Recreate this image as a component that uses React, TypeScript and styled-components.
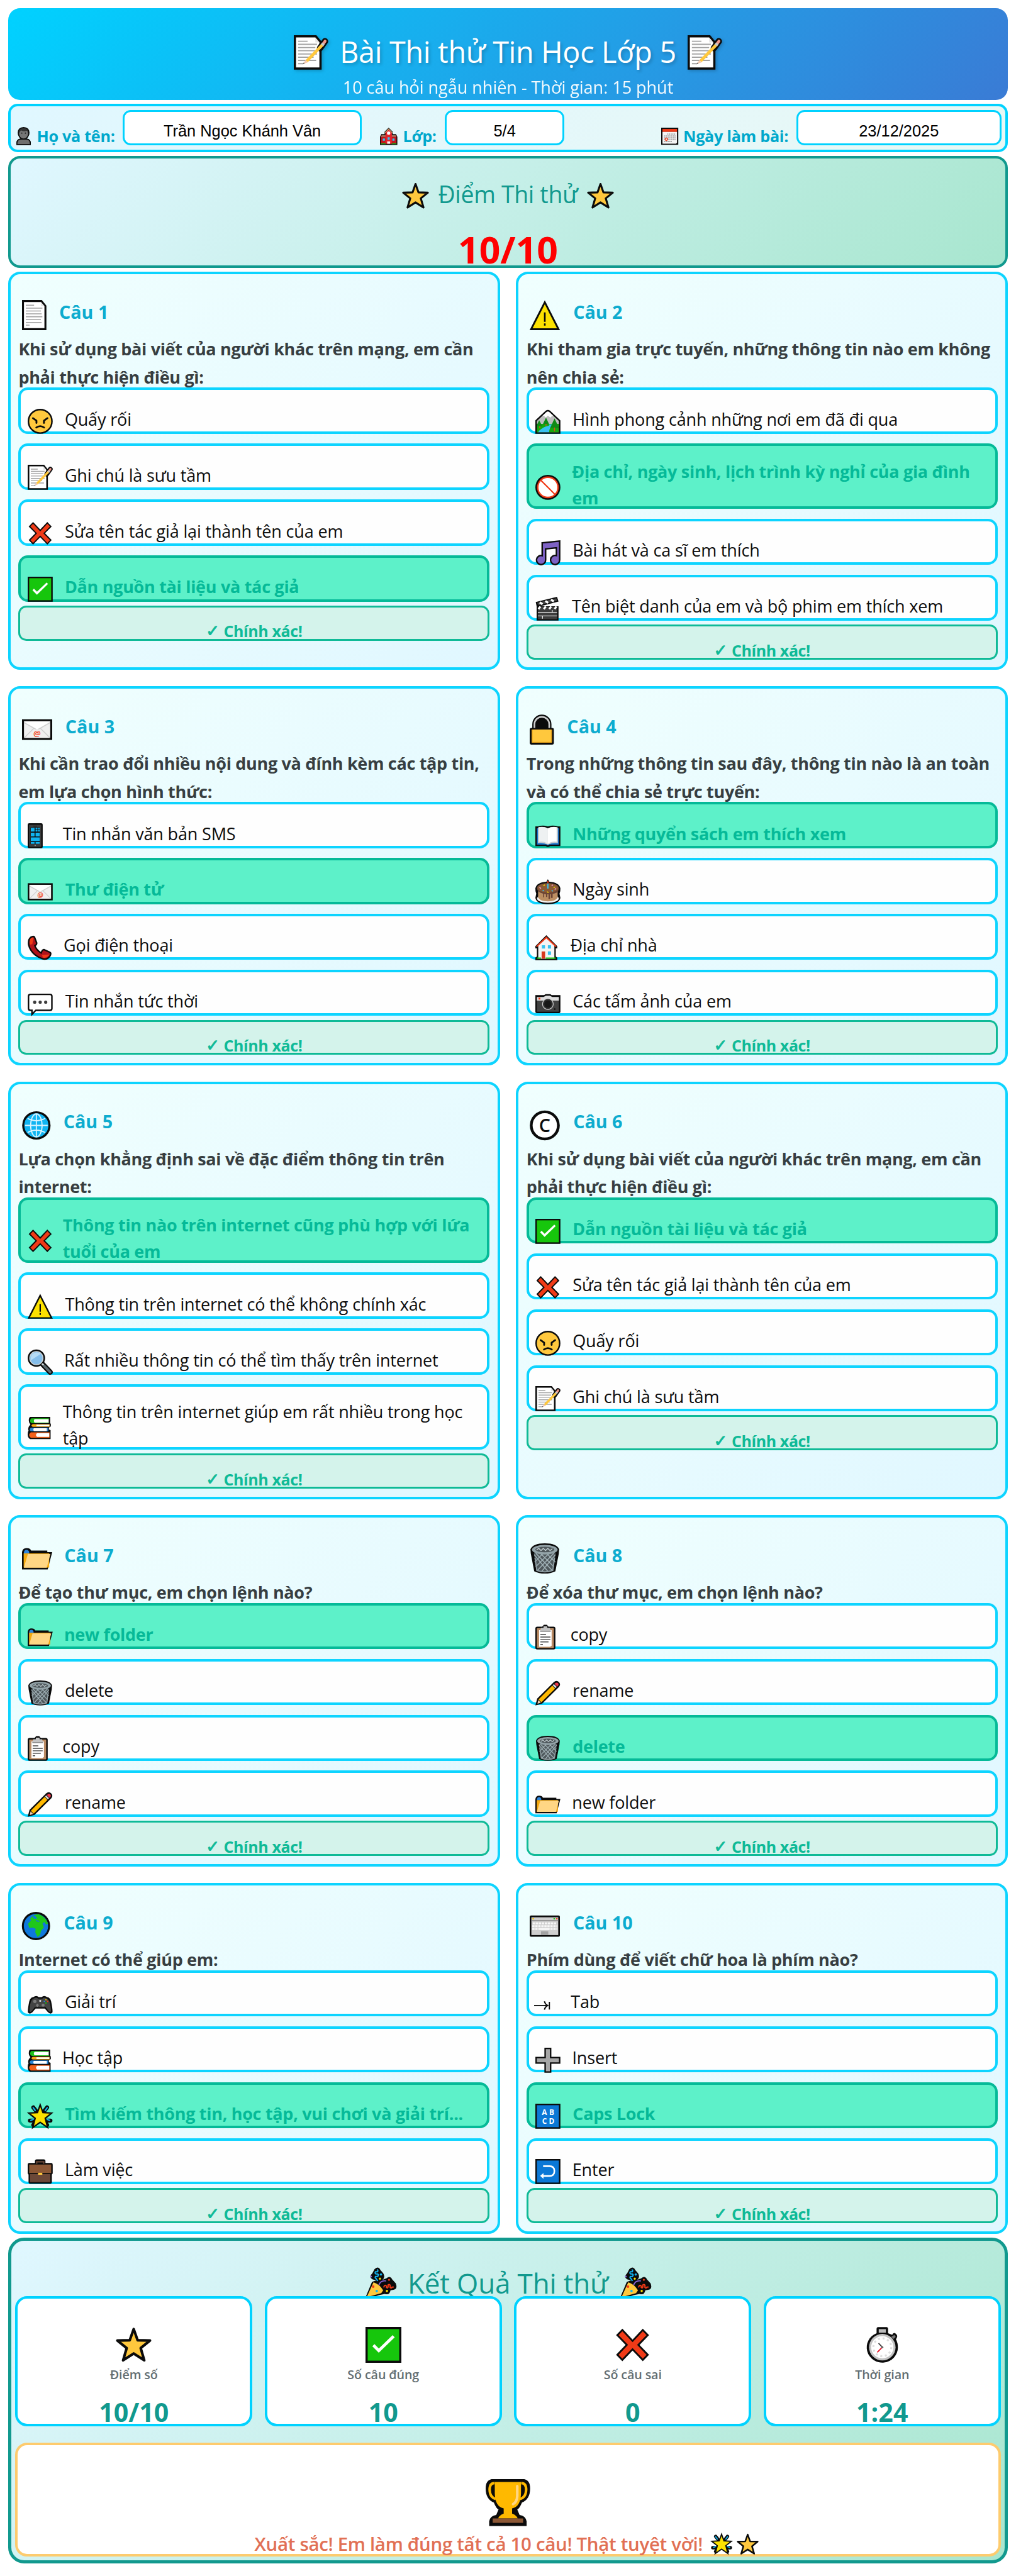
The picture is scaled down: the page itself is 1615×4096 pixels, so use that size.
import type { ReactNode } from 'react';
import styled, { createGlobalStyle, css } from 'styled-components';

const GlobalStyle = createGlobalStyle`
  * {
    box-sizing: border-box;
  }

  body {
    margin: 0;
    background: #fff;
    font-family: 'Open Sans', 'Noto Sans', sans-serif;
  }
`;

/* ---------- icons, all drawn on a 40 unit high grid ---------- */

const K = '#0b0b0b';
const STAR = 'M20 2.4L24.4 14.8L38.2 15.2L27.8 23.6L31.8 37.2L20 29.6L8.2 37.2L12.2 23.6L1.8 15.2L15.6 14.8Z';

const paper = (
  <>
    <path d="M1.3 1.3H25.6L31 8V38.7H1.3Z" fill="#fff" stroke={K} strokeWidth="2.6" />
    <path d="M25 2.6V8.4H30" fill="#e6e6e6" />
  </>
);

const glyphs: Record<string, { w?: number; art: ReactNode }> = {
  page: {
    w: 32,
    art: (
      <>
        {paper}
        <path d="M5 7h11M5 10.9h22M5 14.6h20M5 18.4h21M5 22.2h22M5 26h20M5 29.8h21M5 33.4h5" stroke="#a3a3a3" strokeWidth="1.3" />
      </>
    ),
  },
  memo: {
    art: (
      <>
        {paper}
        <path d="M5 7h11M5 10.6h22M5 14.3h20M5 18h22M5 21.8h22M5 25.5h18M5 29.2h21M5 33h6" stroke="#a3a3a3" strokeWidth="1.4" />
        <path d="M36.2 7L30.5 15" stroke={K} strokeWidth="7.4" strokeLinecap="round" />
        <path d="M36.3 6.9L34.5 9.5" stroke="#f0978a" strokeWidth="3.4" strokeLinecap="round" />
        <path d="M34.4 9.4L32.6 12" stroke="#c9c9c9" strokeWidth="3.8" />
        <path d="M32.8 11.6L15 30" stroke="#ffc83d" strokeWidth="3.6" />
        <path d="M13.6 28.8L16.4 31.4L10.6 33.6Z" fill="#f4c9b0" />
        <path d="M11.6 31.6L12.6 32.8L10.4 33.8Z" fill="#555" />
      </>
    ),
  },
  warning: {
    art: (
      <>
        <path d="M20 3L38.2 38.8H1.8Z" fill="#fce100" stroke={K} strokeWidth="2.4" />
        <path d="M20 16.5V29M20 31V34" stroke={K} strokeWidth="2.2" />
      </>
    ),
  },
  envelope: {
    art: (
      <>
        <rect x="1.3" y="7.7" width="37.4" height="24.8" fill="#f0f0f0" />
        <path d="M2 9L20 20L38 9Z" fill="#fff" />
        <path d="M2 10.5L20 20.5L38 10.5M2.5 31.5L15.5 18.5M37.5 31.5L24.5 18.5" fill="none" stroke="#cfcfcf" strokeWidth="1.3" />
        <circle cx="20" cy="25" r="5.6" fill="#f0f0f0" />
        <text x="20" y="28.8" textAnchor="middle" fontSize="11" fontWeight="600" fill="#f03a17">@</text>
        <rect x="1.3" y="7.7" width="37.4" height="24.8" fill="none" stroke={K} strokeWidth="2.6" />
      </>
    ),
  },
  lock: {
    w: 32,
    art: (
      <>
        <path d="M3.4 22V13A12.7 12.7 0 0 1 28.8 13V22Z" fill={K} />
        <path d="M6.3 20V13A9.8 9.8 0 0 1 25.9 13V20" fill="none" stroke="#cccccc" strokeWidth="2.2" />
        <rect y="18" width="32" height="22" rx="2" fill={K} />
        <rect x="2.6" y="20" width="26.8" height="17.4" rx="1" fill="#ffc83d" />
        <path d="M3.2 20V37M28.8 20V37M3 37H29" stroke="#e8a31c" strokeWidth="1.2" />
      </>
    ),
  },
  globe: {
    w: 38,
    art: (
      <>
        <circle cx="19" cy="20.4" r="17.4" fill="#10b4f2" stroke={K} strokeWidth="2.8" />
        <g fill="none" stroke="#d9f4ff" strokeWidth="1.5">
          <path d="M4 20.4H34M19 5V36M7.4 11Q19 17.4 30.6 11M7.4 29.8Q19 23.4 30.6 29.8" />
          <ellipse cx="19" cy="20.4" rx="7.6" ry="15.2" />
        </g>
      </>
    ),
  },
  copyright: {
    art: (
      <>
        <circle cx="20" cy="20.4" r="18" fill="#fff" stroke={K} strokeWidth="3.7" />
        <text x="20" y="28.9" textAnchor="middle" fontSize="24" fontWeight="600" fill={K}>C</text>
      </>
    ),
  },
  folder: {
    art: (
      <>
        <path d="M0 11.5Q1 6.3 6 6.3Q11 6.3 12 9.6H33.5V11.6H40L34 34.5H0Z" fill={K} />
        <path d="M2.4 13Q2.6 8.6 6 8.6Q9 8.6 9.6 12.4L9 13.6H2.4Z" fill="#2f86dd" />
        <path d="M2.2 13.4H36V32H2.2Z" fill="#f5a90f" />
        <path d="M7.8 14.2H37.6L32.8 32.2H2.4Z" fill="#ffd684" />
      </>
    ),
  },
  trash: {
    art: (
      <>
        <path d="M1 8Q4 0 20 0Q36 0 39 8L38.5 14L34 37Q28 40 20 40Q12 40 6 37L1.5 14Z" fill={K} />
        <path d="M5.5 13L9 36Q20 39.6 31 36L34.5 13Z" fill="#4f585c" />
        <path d="M8 13L30 36M15 14L32 31M23 14L34 25M32 13L10 36M25 14L8 31M17 14L6.5 25M6 15L24 37M34 15L16 37" stroke="#9fb0b5" strokeWidth="1.3" />
        <path d="M7 19L9.5 36Q20 39.6 30.5 36L33 19" fill="none" stroke="#8f9ea3" strokeWidth="1.6" />
        <ellipse cx="20" cy="8.4" rx="17" ry="6.4" fill="#93a3a8" />
        <ellipse cx="20" cy="8.2" rx="12.6" ry="3.6" fill="#4f585c" />
        <path d="M9 9L12 6.6L15 9.6L18 6.6L21 9.6L24 6.6L27 9.6L30 7" fill="none" stroke="#c4d0d3" strokeWidth="1.1" />
      </>
    ),
  },
  earth: {
    w: 38,
    art: (
      <>
        <circle cx="18.5" cy="20.4" r="17.4" fill="#0f78dc" stroke={K} strokeWidth="2.6" />
        <path d="M15 6L20 5L22 4.6Q31 8 34.4 17L32 18.6L29.4 15L27 17.6L29 22L25 27L24 32L20.6 35L17.6 29L18 24L14 22.6L9.6 23L8 17.4L12 13L10.6 11L13.6 7.4L15.6 10.4L20 11L18 7.6Z" fill="#1fc71a" />
        <path d="M19 12.4L23 13.6L22.6 15L18 14Z" fill="#0f78dc" />
      </>
    ),
  },
  keyboard: {
    art: (
      <>
        <rect y="6.5" width="40" height="28" rx="1.6" fill={K} />
        <rect x="2.2" y="8.8" width="35.6" height="23.6" fill="#cfcfcf" />
        <rect x="2.2" y="12.6" width="35.6" height="1.2" fill="#8c8c8c" />
        <path d="M4 16.8H36M3.4 20.6H36.6M3.4 24.4H36.6" stroke="#f7f7f7" strokeWidth="2.5" strokeDasharray="3 1" />
        <path d="M13 24.4H26" stroke="#f7f7f7" strokeWidth="2.5" />
        <rect x="15" y="27.4" width="9.6" height="5" fill="#a3a3a3" />
        <path d="M3.6 10.8H5.6" stroke="#f7c600" strokeWidth="1.5" />
        <path d="M31.5 10.8H33.5" stroke="#16c60c" strokeWidth="1.5" />
        <path d="M35 10.8H37" stroke="#f03a17" strokeWidth="1.5" />
      </>
    ),
  },
  angry: {
    art: (
      <>
        <circle cx="20" cy="20" r="18.8" fill="#ffc83d" stroke={K} strokeWidth="2.4" />
        <path d="M8.4 15L14 19V22.6M31.6 15L26 19V22.6" fill="none" stroke={K} strokeWidth="2.9" strokeLinecap="round" strokeLinejoin="round" />
        <path d="M13.6 30Q20 25.4 26.4 30" fill="none" stroke={K} strokeWidth="2.6" strokeLinecap="round" />
      </>
    ),
  },
  cross: {
    art: (
      <path
        d="M8.6 3.4L20 15.6L31.4 3.4L37 9.2L26.4 20L37 31L31.4 36.8L20 25L8.6 36.8L3 31L13.6 20L3 9.2Z"
        fill="#f03a17"
        stroke={K}
        strokeWidth="2"
      />
    ),
  },
  check: {
    art: (
      <>
        <rect x="1.2" y="1.2" width="37.6" height="37.6" fill="#16c60c" stroke={K} strokeWidth="2.4" />
        <path d="M8.8 20.4L14.8 26.4L31.4 10.4" fill="none" stroke="#fff" strokeWidth="3.4" />
      </>
    ),
  },
  landscape: {
    art: (
      <>
        <path d="M1.2 19L17 4.2Q20 2 23 4.2L38.8 19V38.8H1.2Z" fill="#bfbfbf" />
        <path d="M10 12L17 4.2Q20 2 23 4.2L30 12L27 11L24 14L20 11L16.6 14L13.6 11Z" fill="#fff" />
        <path d="M2 24H38V38H2Z" fill="#16a80c" />
        <path d="M22 25H28Q22 30 22 38H4Q10 29 22 27Z" fill="#37c2f0" />
        <path d="M17 14L22 24.6H12ZM6 18L11 28H1.6ZM30.6 15.4L38 31H23.6Z" fill="#0f8a16" />
        <path d="M17 24V27M7 28V31M30.6 30V36" stroke="#d1541b" strokeWidth="1.6" />
        <path d="M1.2 19L17 4.2Q20 2 23 4.2L38.8 19V38.8H1.2Z" fill="none" stroke={K} strokeWidth="2.4" />
      </>
    ),
  },
  ban: {
    art: (
      <>
        <circle cx="20" cy="20" r="20" fill={K} />
        <circle cx="20" cy="20" r="16.2" fill="#fff" stroke="#f03a17" strokeWidth="2.4" />
        <path d="M8.6 8.6L31.4 31.4" stroke="#f03a17" strokeWidth="2.2" />
      </>
    ),
  },
  music: {
    art: (
      <path
        d="M10.9 4.2L38.8 1.3V31.4A7.3 7.3 0 1 1 33.6 24.6V12.2L16.4 13.9V31.4A7.3 7.3 0 1 1 10.9 24.6Z"
        fill="#7e62c4"
        stroke={K}
        strokeWidth="2.4"
      />
    ),
  },
  clapper: {
    art: (
      <>
        <path d="M0.6 10.4L34.6 2L37 9.6L8 17H37V40H2V17Z" fill={K} />
        <path d="M2.8 11.6L33.4 4.2L34.6 8.4L5.4 15.4Z" fill="#444" />
        <path d="M7 10.8L11.4 13.8M16 8.6L20.4 11.6M25 6.4L29.4 9.4" stroke="#fff" strokeWidth="3.4" />
        <rect x="4.2" y="18" width="30.6" height="19.8" fill="#3d3d3d" />
        <path d="M5 21.6L8 17.4M13.6 21.6L16.6 17.4M22.2 21.6L25.2 17.4M30.8 21.6L33.6 17.4" stroke="#fff" strokeWidth="3.2" />
        <path d="M4 27H34.6M4 32.4H34.6M27 23V27M11.4 32.4V37" stroke="#f0f0f0" strokeWidth="1.2" />
      </>
    ),
  },
  mobile: {
    w: 24,
    art: (
      <>
        <rect width="24" height="40" rx="2.4" fill={K} />
        <rect x="2.2" y="2.4" width="19.6" height="35.4" rx="1" fill="#3c3c3c" />
        <rect x="4.6" y="6.6" width="14.8" height="26.6" fill={K} />
        <path d="M5 7.4h6v6H5zM12.6 7.4h3v2.6h-3zM16.6 7.4h2.6v2.6h-2.6zM12.6 11h3v2.4h-3zM16.6 11h2.6v2.4h-2.6zM5 15h6v6H5zM12.6 15h6.6v6h-6.6zM5 22.6h14.2v6H5zM5 30.2h6v2.6H5zM12.6 30.2h6.6v2.6h-6.6z" fill="#10b4f2" />
        <circle cx="12" cy="35.6" r="0.9" fill="#aaa" />
        <path d="M9 4.5H15" stroke={K} strokeWidth="1" />
      </>
    ),
  },
  handset: {
    art: (
      <>
        <path d="M5 3.4Q9.6 0.6 11 3.4L14.4 12.4Q14.6 15.4 11.4 16.6Q13.6 23.6 21.6 28.4Q23.4 22.8 26 23L35.6 27.4Q38.2 28.8 35.4 33.6Q31 40.4 22.6 37.4Q5.6 31 1.6 15.6Q0.4 7 5 3.4Z" fill="#b0141c" stroke={K} strokeWidth="2.4" />
        <path d="M5.4 4.8Q8 3 9.4 4.4L7.4 14.4L4 15Q1.6 8 5.4 4.8Z" fill="#f03a17" />
        <path d="M34.8 31Q31.6 37 24.6 36L22.6 31.6Q29 31 34.8 31Z" fill="#f03a17" />
      </>
    ),
  },
  speech: {
    art: (
      <>
        <path d="M4.4 5.2H35.6Q38.7 5.2 38.7 8.2V27.6Q38.7 30.6 35.6 30.6H13L6.8 37.2V30.6H4.4Q1.3 30.6 1.3 27.6V8.2Q1.3 5.2 4.4 5.2Z" fill="#fff" stroke={K} strokeWidth="2.4" />
        <circle cx="11.2" cy="17.6" r="2.6" fill="#3d3d3d" />
        <circle cx="20" cy="17.6" r="2.6" fill="#3d3d3d" />
        <circle cx="28.8" cy="17.6" r="2.6" fill="#3d3d3d" />
      </>
    ),
  },
  book: {
    art: (
      <>
        <path d="M0 5H4Q12 2.4 20 5Q28 2.4 36 5H40V36.4H23.6Q20 39.4 16.4 36.4H0Z" fill={K} />
        <path d="M2.4 8H37.6V34.2H22.6Q20 36.6 17.4 34.2H2.4Z" fill="#1673cf" />
        <path d="M4 6.8Q13 4.4 20 8.4Q27 4.4 36 6.8V32Q27 30.6 20 34.2Q13 30.6 4 32Z" fill="#c7cdd0" />
        <path d="M6 6.4Q14 4.8 20 8.4V32.8Q14 28.4 6 29.6Z" fill="#eef1f2" />
        <path d="M34 6.4Q26 4.8 20 8.4V32.8Q26 28.4 34 29.6Z" fill="#fff" />
      </>
    ),
  },
  cake: {
    art: (
      <>
        <path d="M20 0L22.4 4Q38 5 40 14.6Q40.2 20 38.6 23L40 30Q38 40 20 40Q2 40 0 30L1.4 23Q-0.2 20 0 14.6Q2 5 17.6 4Z" fill={K} />
        <ellipse cx="20" cy="31" rx="17.4" ry="6.6" fill="#f4f4f4" />
        <path d="M4.4 16V29.4Q8 35.4 20 35.4Q32 35.4 35.6 29.4V16Z" fill="#bc8f62" />
        <path d="M2.4 14Q4 6.4 20 6.4Q36 6.4 37.6 14Q37.4 21 31 22.6L27.6 23.4V30H25V24H23.4V31.6H21V24H19V28.4H17V24L14 23.6V29H12.4V23Q2.6 20.6 2.4 14Z" fill="#6b4434" />
        <ellipse cx="20" cy="14" rx="16.6" ry="7.4" fill="#8b5a35" />
        <path d="M20 7V15" stroke="#37c2f0" strokeWidth="2" />
        <path d="M20 3V6" stroke="#f03a17" strokeWidth="2" />
        <path d="M6.6 13L9 15M26 10.4L28 9M33 14.6L31 16.6" stroke="#ff9bd8" strokeWidth="1.5" />
        <path d="M13 10.6L15 9M18.6 20L21 21.6M29 13L31.6 12.6" stroke="#fce100" strokeWidth="1.5" />
        <path d="M11.6 19L13.6 17.4M26 17.6L28 19.4" stroke="#37c2f0" strokeWidth="1.5" />
      </>
    ),
  },
  house: {
    w: 35,
    art: (
      <>
        <path d="M17.5 0L35 17.5V21H32.6V34L35 36V40H0V36L2.4 34V21H0V17.5Z" fill={K} />
        <path d="M4.6 16L17.5 4.4L30.4 16V37.6H4.6Z" fill="#f4f4f4" />
        <path d="M1.8 18.4L17.5 3.6L33.2 18.4" fill="none" stroke="#f03a17" strokeWidth="2.2" />
        <path d="M10.4 16h5v5.4h-5zM20 16h5v5.4h-5zM20 26h5v5.4h-5z" fill="#37c2f0" />
        <path d="M10 26h5.6v11.6H10z" fill="#d9381e" />
        <path d="M2.4 37.8V35.6H9V37.8ZM16.6 37.8V35.6H32.6V37.8Z" fill="#16c60c" />
      </>
    ),
  },
  camera: {
    art: (
      <>
        <path d="M0 6.4H14L16.4 4.8H24L26 6.4H40V33Q40 35.2 37.6 35.2H2.4Q0 35.2 0 33Z" fill={K} />
        <path d="M2.4 14.4H37.6V32.8H2.4Z" fill="#414141" />
        <path d="M2.4 9.4H13L17 7.4H23L27 9.4H37.6V15H2.4Z" fill="#dedede" />
        <path d="M5 10.4h3v3H5z" fill="#f03a17" />
        <circle cx="20" cy="20.6" r="8.6" fill="#2c2c2c" stroke="#cfcfcf" strokeWidth="1.2" />
        <circle cx="20" cy="20.6" r="5.6" fill="#171717" />
        <circle cx="31" cy="28.6" r="1.2" fill={K} />
      </>
    ),
  },
  search: {
    art: (
      <>
        <path d="M24 23.4L36 36" stroke={K} strokeWidth="8.4" strokeLinecap="round" />
        <circle cx="13.9" cy="13.6" r="13.9" fill={K} />
        <path d="M23 22.4L26 25.6" stroke="#cfd8db" strokeWidth="3" />
        <path d="M26.4 26L35.8 35.8" stroke="#5d6b70" strokeWidth="4.2" strokeLinecap="round" />
        <circle cx="13.9" cy="13.6" r="10.6" fill="#84bdea" stroke="#c9d3d8" strokeWidth="1.6" />
        <path d="M5 17Q3.6 8 11 5Q17 3 20.6 7Z" fill="#b5dbf5" />
      </>
    ),
  },
  books: {
    w: 37,
    art: (
      <>
        <path d="M4 3H36V13L37 14V18L34 20V23L36.6 24V38.4H4Q0 37 0 31Q0 26.6 1.4 25Q0 22 2 18Q3.4 16.4 4.4 15Q1 12 2 6Q2.6 3.6 4 3Z" fill={K} />
        <path d="M6 5.2H34V7H11V12H34V13H7Q3.6 12.6 4 8.6Q4.4 5.4 6 5.2Z" fill="#1fbf1a" />
        <path d="M11 6.6H33.6V12H11Q8.6 9.4 11 6.6Z" fill="#fff" />
        <path d="M8 14.6H35V18.8H8Q4 17 8 14.6Z" fill="#f7a916" />
        <path d="M14 15.4H34.6V18H14Z" fill="#fff" />
        <path d="M5 20.4H33V26H5Q1.4 23.4 5 20.4Z" fill="#2c86d6" />
        <path d="M10 21.2H30.6V25.6H10Q8 23.4 10 21.2Z" fill="#fff" />
        <path d="M5 27.6H35V36.4H5Q-0.4 32 5 27.6Z" fill="#f5611a" />
        <path d="M15 29H34.4V35H15Q11.6 32 15 29Z" fill="#fff" />
      </>
    ),
  },
  clipboard: {
    w: 32,
    art: (
      <>
        <path d="M3 3.4H11L13.6 0.6H18.4L21 3.4H29Q32 3.4 32 6.4V37Q32 40 29 40H3Q0 40 0 37V6.4Q0 3.4 3 3.4Z" fill={K} />
        <rect x="2.4" y="6" width="27.2" height="31.6" rx="1" fill="#b98a63" />
        <path d="M6 9H26V34L23.4 35.8H6Z" fill="#fff" />
        <path d="M9 5.6H13V3H19V5.6H23L25 11H7Z" fill="#c4c4c4" />
        <path d="M7.6 11H24.4" stroke="#777" strokeWidth="1.3" />
        <path d="M8 16H17M8 20H24M8 24H24M8 28H21M8 32H12" stroke="#444" strokeWidth="1.5" />
      </>
    ),
  },
  pencil: {
    art: (
      <>
        <path d="M0 40L3 29L29.6 2.4Q34 -1 38 3Q41 6.6 37.6 10.6L11 37Z" fill={K} />
        <path d="M5 30.4L27 8.4L31.6 13L9.6 35Z" fill="#ffb900" />
        <path d="M27.6 7.8L29.6 5.8L34.2 10.4L32.2 12.4Z" fill="#d8d8d8" />
        <path d="M30.4 5.2Q34 2.2 36.4 4.6Q38.2 7 35 9.8Z" fill="#f0384a" />
        <path d="M4.6 31.4L8.8 35.4L3.4 37.2Z" fill="#f2d0b0" />
      </>
    ),
  },
  gamepad: {
    art: (
      <>
        <path d="M9 8.6Q14 5 17.6 8.6H22.4Q26 5 31 8.6Q37 9 38.4 20Q40.4 31 39.4 33.4Q36.4 36.4 32.6 33L27.4 27H12.6L7.4 33Q3.6 36.4 0.6 33.4Q-0.4 31 1.6 20Q3 9 9 8.6Z" fill={K} />
        <path d="M10 10.6Q14 8.4 16.6 11H23.4Q26 8.4 30 10.6Q34.6 12 36 20.6Q37.6 29 37 31.6Q34.6 33 32.6 30L28.6 24.6H11.4L7.4 30Q5.4 33 3 31.6Q2.4 29 4 20.6Q5.4 12 10 10.6Z" fill="#444" />
        <circle cx="11.4" cy="15.4" r="2.6" fill="#7c7c7c" />
        <circle cx="24.6" cy="21.4" r="2.4" fill="#7c7c7c" />
        <path d="M15.4 19V24M13 21.5H17.8" stroke="#7c7c7c" strokeWidth="1.6" />
        <circle cx="20" cy="14.6" r="1.6" fill="#e0e0e0" />
        <circle cx="29.2" cy="12.8" r="1.1" fill="#f7c600" />
        <circle cx="31.8" cy="15.4" r="1.1" fill="#f03a17" />
        <circle cx="29.2" cy="18" r="1.1" fill="#16c60c" />
        <circle cx="26.6" cy="15.4" r="1.1" fill="#2c86d6" />
      </>
    ),
  },
  tab: {
    w: 32,
    art: <path d="M-2 22H18.6M14.4 15.4Q15.6 20 19.6 22Q15.6 24 14.4 28.6M22.4 16V28.4" fill="none" stroke={K} strokeWidth="1.9" />,
  },
  plus: {
    art: <path d="M15.6 1.2H24.4V15.6H38.8V24.4H24.4V38.8H15.6V24.4H1.2V15.6H15.6Z" fill="#a6a6a6" stroke={K} strokeWidth="2.3" />,
  },
  glow: {
    art: (
      <>
        <path d="M9 6L31 34M31 6L9 34M3.6 27L36.4 27" stroke={K} strokeWidth="6.4" strokeLinecap="round" />
        <path d="M8.8 6.4L12 10.8M31.2 6.4L28 10.8M5 26.6L9 25M35 26.6L31 25M10 33L12 30.6M30 33L28 30.6" stroke="#10b4f2" strokeWidth="2.2" strokeLinecap="round" />
        <path d="M20 1.8L24.4 14.2L38.4 15L28 23.4L31.8 38L20 29.8L8.2 38L12 23.4L1.6 15L15.6 14.2Z" fill="#fce100" stroke={K} strokeWidth="2.2" />
      </>
    ),
  },
  briefcase: {
    art: (
      <>
        <path d="M11.6 6.4V3.4Q11.6 0.6 14.4 0.6H25.6Q28.4 0.6 28.4 3.4V6.4H38Q40 6.4 40 9V23L38.6 25V37Q38.6 39.4 36 39.4H4Q1.4 39.4 1.4 37V25L0 23V9Q0 6.4 2 6.4Z" fill={K} />
        <path d="M2.4 8.8H37.6V22.4H2.4Z" fill="#8b5735" />
        <path d="M3.8 24H36.2V37H3.8Z" fill="#6b4838" />
        <path d="M14.4 7.6V4.4H25.6V7.6" fill="none" stroke="#6b4838" strokeWidth="2.2" />
        <rect x="16.6" y="22" width="6.8" height="3.2" fill="#ffc83d" />
      </>
    ),
  },
  abcd: {
    art: (
      <>
        <rect x="1.2" y="1.2" width="37.6" height="37.6" fill="#0b78d6" stroke={K} strokeWidth="2.4" />
        <g fill="#fff" fontSize="12" textAnchor="middle">
          <text x="14.4" y="18.4">A</text>
          <text x="26" y="18.4">B</text>
          <text x="14.4" y="32">C</text>
          <text x="26" y="32">D</text>
        </g>
      </>
    ),
  },
  enter: {
    art: (
      <>
        <rect x="1.2" y="1.2" width="37.6" height="37.6" fill="#0b78d6" stroke={K} strokeWidth="2.4" />
        <path d="M12.4 11.4H22.6Q30.4 11.4 30.4 19Q30.4 27 22.6 27H10.4" fill="none" stroke="#fff" strokeWidth="2.6" />
        <path d="M7.6 27L13 22.4V31.6Z" fill="#fff" />
      </>
    ),
  },
  star: {
    art: <path d={STAR} fill="#ffc83d" stroke={K} strokeWidth="2.9" strokeLinejoin="round" />,
  },
  person: {
    w: 32,
    art: (
      <>
        <path d="M16 0Q29 1 29 12Q29 17 27.4 19.6Q25.6 24 23 25.4Q32 27 32 35V40H0V35Q0 27 9 25.4Q6.4 24 4.6 19.6Q3 17 3 12Q3 1 16 0Z" fill={K} />
        <path d="M2.4 37.6V34.6Q3.4 28 10 27.8H22Q28.6 28 29.6 34.6V37.6Z" fill="#6f6f6f" />
        <ellipse cx="16" cy="14.6" rx="10" ry="10.6" fill="#767676" />
        <path d="M5.4 12Q5.4 2.6 16 2.4Q26.6 2.6 26.6 12L24 8Q15 11 10 7.4Q8 12 5.4 12Z" fill="#333" />
        <circle cx="12" cy="13.4" r="1.3" fill={K} />
        <circle cx="20" cy="13.4" r="1.3" fill={K} />
      </>
    ),
  },
  school: {
    art: (
      <>
        <path d="M20 0L29.4 9.4V15H37L40 21V40H0V21L3 15H10.6V9.4Z" fill={K} />
        <path d="M2 18H38V37H2Z" fill="#c0161c" />
        <path d="M2 21.4L4.4 17H35.6L38 21.4Z" fill="#a2705a" />
        <path d="M12.6 37V11L20 4L27.4 11V37Z" fill="#e3232b" />
        <path d="M11.4 12L20 3.4L28.6 12" fill="none" stroke="#c59a6c" strokeWidth="2" />
        <circle cx="20" cy="12.6" r="3.8" fill="#fff" />
        <path d="M6.4 25h5v5h-5zM28.6 25h5v5h-5zM17.6 22h4.8v6h-4.8z" fill="#37c2f0" />
        <path d="M16.6 31.6h6.8V37h-6.8z" fill="#f4f4f4" />
        <path d="M2 36h11v2H2zM27 36h11v2H27z" fill="#16a80c" />
      </>
    ),
  },
  calendar: {
    art: (
      <>
        <rect width="40" height="40" fill={K} />
        <path d="M3 3H37V10H3Z" fill="#f03a17" />
        <path d="M3 10H37V35L35 37.4H3Z" fill="#f4f4f4" />
        <path d="M14 15H34M7 19.4H34M7 23.8H34M7 28.2H34M7 32.4H25" stroke="#a3a3a3" strokeWidth="2.8" strokeDasharray="2.6 1.4" />
        <circle cx="12" cy="27" r="2.8" fill="#f4f4f4" stroke="#f03a17" strokeWidth="2" />
      </>
    ),
  },
  party: {
    art: (
      <>
        <path d="M0.4 40L9.6 18L15 16.4L10 15Q5 12 10 7.6L12.6 2.6Q17 -2 20 3.4L23.4 7.4Q26.4 12 22.6 15.6L27.6 13.6Q32 10 34.4 15L39 20Q41.6 27 36 28L32.4 28.6Q31.4 35 25.4 33L18 34.6L2 40Z" fill={K} />
        <path d="M3 37L11.4 18.6Q19 21 23.4 28.6L21 32Z" fill="#ffc83d" />
        <circle cx="11" cy="24" r="1.6" fill="#f03a17" />
        <circle cx="15.4" cy="29.4" r="1.5" fill="#10b4f2" />
        <path d="M18 22Q20.6 15.6 27 17" fill="none" stroke="#8a62d8" strokeWidth="1.4" />
        <path d="M15.6 3Q17.6 3.6 16.4 5.6H14Q12.6 7.4 14.6 8.4H16.6Q18.4 9.6 16.4 11.4H14Q12.8 13 14.6 14L16.6 17" fill="none" stroke="#10b4f2" strokeWidth="1.6" />
        <path d="M24 25Q25.4 20.6 27.4 23.4V25Q28.6 26.4 29.4 24.6V22Q31 20.4 32 22.4V25Q33.4 26.6 34.4 24.6L36.4 24.4" fill="none" stroke="#f03a17" strokeWidth="1.6" />
        <circle cx="8.4" cy="11.6" r="1.1" fill="#8a62d8" />
        <circle cx="20.6" cy="9" r="1.4" fill="#10b4f2" />
        <circle cx="19.4" cy="14.2" r="1.3" fill="#fce100" />
        <circle cx="30.6" cy="15.6" r="1.3" fill="#f03a17" />
        <circle cx="28" cy="29.4" r="1.4" fill="#fce100" />
      </>
    ),
  },
  stopwatch: {
    art: (
      <>
        <path d="M15 0.2H25Q26.4 0.2 26.4 2V7L31 8.8Q33 4.6 36 8.6Q37.6 10.6 35.2 13.6Q37.4 17.6 37.4 23A17.4 17 0 1 1 13.6 7V2Q13.6 0.2 15 0.2Z" fill={K} />
        <rect x="16" y="2.4" width="8" height="4" fill="#bdbdbd" />
        <path d="M30 11L33.4 9L35 11L32.6 13.4Z" fill="#777" />
        <circle cx="20" cy="22.6" r="14.8" fill="#c4c4c4" />
        <circle cx="20" cy="22.6" r="12.4" fill="#fff" />
        <circle cx="20" cy="22.6" r="10" fill="none" stroke="#dedede" strokeWidth="2.2" strokeDasharray="2.2 3.04" />
        <path d="M20 22.6L15.8 18.2" stroke="#444" strokeWidth="1.3" />
        <path d="M20 22.6L14.4 28.4" stroke="#e81224" strokeWidth="1.3" />
        <circle cx="20" cy="22.6" r="1.2" fill="#666" />
      </>
    ),
  },
  trophy: {
    w: 38,
    art: (
      <>
        <path d="M5 0H33Q38 1 38 8Q38 17 31 20Q29 25 27 26L29 30.6Q34 31 35 36V40H3V36Q4 31 9 30.6L11 26Q9 25 7 20Q0 17 0 8Q0 1 5 0Z" fill={K} />
        <path d="M7.6 3.4Q3.4 3.4 3.4 9Q3.6 15.6 8.6 17M30.4 3.4Q34.6 3.4 34.6 9Q34.4 15.6 29.4 17" fill="none" stroke="#ffb900" strokeWidth="2.2" />
        <path d="M7.8 2.4H30.2V12Q30 23.6 22.6 25V29.4Q26.6 31 27.4 33.6H10.6Q11.4 31 15.4 29.4V25Q8 23.6 7.8 12Z" fill="#ffb900" />
        <path d="M27 6V14.6Q26.8 19.4 23.4 21.4" fill="none" stroke="#ffd684" strokeWidth="2.2" strokeLinecap="round" />
        <path d="M6 33.6H32V37.4H6Z" fill="#8b5735" />
      </>
    ),
  },
};

const Svg = styled.svg<{ $lift?: number; $gap?: number }>`
  display: block;
  flex: none;
  overflow: visible;
  margin-top: ${(p) => p.$lift ?? 0}px;
  margin-right: ${(p) => p.$gap ?? 0}px;
`;

type IconProps = { name: string; size: number; lift?: number; advance?: number };

const Icon = ({ name, size, lift, advance }: IconProps) => {
  const { w = 40, art } = glyphs[name];
  const width = (size * w) / 40;

  return (
    <Svg viewBox={`0 0 ${w} 40`} width={width} height={size} $lift={lift} $gap={advance ? advance - width : 0} aria-hidden="true">
      {art}
    </Svg>
  );
};

/* ---------- page parts ---------- */

const Page = styled.main`
  width: 1615px;
  height: 4096px;
  padding: 12.8px 12.8px 0;
  overflow: hidden;
`;

const Banner = styled.header`
  height: 146px;
  padding-top: 39.7px;
  border-radius: 19px;
  background: linear-gradient(135deg, #00d2ff 0%, #3a7bd5 100%);
  color: #fff;
`;

const BannerTitle = styled.h1`
  display: flex;
  justify-content: center;
  gap: 18px;
  height: 60px;
  margin: 0 0 5.5px;
  font-size: 46.7px;
  font-weight: 400;
  line-height: 60px;
  letter-spacing: -0.3px;
  text-shadow: 2.5px 2.5px 5px rgba(0, 0, 0, 0.2);

  svg {
    filter: drop-shadow(2.5px 2.5px 2.5px rgba(0, 0, 0, 0.2));
  }
`;

const BannerText = styled.p`
  margin: 0;
  font-size: 27.1px;
  line-height: 41px;
  letter-spacing: -0.06px;
  text-align: center;
  opacity: 0.95;
`;

const InfoBar = styled.section`
  display: flex;
  gap: 25.4px;
  height: 76.4px;
  margin-top: 6.4px;
  padding: 6.2px;
  border: 4px solid #00d2ff;
  border-radius: 15px;
  background: linear-gradient(135deg, #e0f7ff 0%, #e8f8f5 100%);
`;

const Field = styled.div<{ $end?: boolean }>`
  display: flex;
  margin-left: ${(p) => (p.$end ? 'auto' : 0)};
`;

const FieldLabel = styled.span<{ $width: number }>`
  display: flex;
  width: ${(p) => p.$width}px;
  padding: 23.4px 0 0 3.3px;
  color: #00a8cc;
  font-size: 25.2px;
  font-weight: 700;
  line-height: 34px;
  letter-spacing: -0.3px;
  white-space: nowrap;
`;

const FieldValue = styled.span<{ $width: number }>`
  width: ${(p) => p.$width}px;
  height: 55.9px;
  padding-top: 8.4px;
  border: 3px solid #00d2ff;
  border-radius: 12.7px;
  background: #fff;
  color: #000;
  font: 25.4px/42.6px 'Liberation Sans', Arial, sans-serif;
  text-align: center;
`;

const ScorePanel = styled.section`
  height: 178px;
  margin-top: 6.5px;
  padding-top: 32.4px;
  border: 4px solid #11998e;
  border-radius: 19px;
  background: linear-gradient(135deg, #e0f7ff 0%, #a8e6cf 100%);
`;

const ScoreTitle = styled.h2`
  display: flex;
  justify-content: center;
  gap: 14px;
  height: 50px;
  margin: 0 0 23.8px;
  color: #11998e;
  font-size: 37.4px;
  font-weight: 400;
  line-height: 50px;
  letter-spacing: -0.3px;
`;

const ScoreValue = styled.p`
  margin: 0;
  color: #f00;
  font-size: 58.8px;
  font-weight: 700;
  line-height: 76px;
  text-align: center;
`;

const Questions = styled.section`
  display: grid;
  grid-template-columns: 1fr 1fr;
  grid-template-rows: 633.1px 603px 663.9px 558.4px 558.6px;
  gap: 25.7px 25.4px;
  margin-top: 6.3px;
`;

const Card = styled.article`
  padding: 0 12.6px;
  border: 4px solid #0dd4ff;
  border-radius: 19px;
  background: linear-gradient(135deg, #f0fffe 0%, #e0f7ff 100%);
`;

const CardHead = styled.div`
  display: flex;
  height: 96.9px;
  padding: 39.4px 0 0 5.6px;
  color: #0daccf;
  font-size: 28.7px;
  font-weight: 700;
  line-height: 40px;
`;

const QuestionText = styled.p`
  margin: 0 0 -6.1px;
  color: #373e41;
  font-size: 27px;
  font-weight: 700;
  line-height: 44.6px;
  letter-spacing: -0.32px;
`;

const Option = styled.div<{ $right?: boolean; $tall?: boolean }>`
  display: flex;
  height: ${(p) => (p.$tall ? 104 : 73.5)}px;
  margin-bottom: 15.4px;
  padding: ${(p) => (p.$tall ? 19.3 : 25.4)}px 9px 0 10.5px;
  border: 4px solid #0dd4ff;
  border-radius: 15.3px;
  background: #fefefe;
  color: #0d0d0d;
  font-size: 27px;
  line-height: 42px;
  letter-spacing: -0.16px;

  ${(p) =>
    p.$right &&
    css`
      border-color: #05ba98;
      background: #5df1c9;
      color: #05ba98;
      font-weight: 700;
      letter-spacing: -0.3px;
    `}
`;

const Feedback = styled.p`
  display: flex;
  justify-content: center;
  gap: 7px;
  height: 55.6px;
  margin: -9px 0 0;
  padding-top: 17.4px;
  border: 3px solid #0fba97;
  border-radius: 12.7px;
  background: #d4f3eb;
  color: #0fba97;
  font-size: 25px;
  font-weight: 700;
  line-height: 40px;
  letter-spacing: -0.4px;
`;

const Tick = styled.span`
  font-family: 'DejaVu Sans', sans-serif;
  font-size: 26px;
  -webkit-text-stroke: 0.9px currentColor;
`;

const ResultPanel = styled.section`
  height: 517.9px;
  margin-top: 6.4px;
  padding: 37px 6.4px 0;
  border: 5px solid #11998e;
  border-radius: 25.4px;
  background: linear-gradient(135deg, #e0f7ff 0%, #a8e6cf 100%);
`;

const ResultTitle = styled.h2`
  display: flex;
  justify-content: center;
  gap: 17px;
  height: 51px;
  margin: 0;
  color: #11998e;
  font-size: 44px;
  font-weight: 400;
  line-height: 61px;
  letter-spacing: -0.15px;
`;

const Stats = styled.div`
  position: relative;
  display: grid;
  grid-template-columns: repeat(4, 1fr);
  gap: 19.4px;
`;

const Stat = styled.div`
  display: flex;
  flex-direction: column;
  align-items: center;
  height: 206.9px;
  padding-top: 45px;
  border: 4px solid #00d2ff;
  border-radius: 19px;
  background: #fff;
`;

const StatLabel = styled.span`
  margin: 3.9px 0 21.3px;
  color: #636e72;
  font-size: 19.7px;
  font-weight: 600;
  line-height: 30px;
  letter-spacing: -0.12px;
`;

const StatValue = styled.strong`
  color: #11998e;
  font-size: 41.2px;
  font-weight: 700;
  line-height: 45px;
`;

const Praise = styled.div`
  display: flex;
  flex-direction: column;
  align-items: center;
  height: 181px;
  margin-top: 25.6px;
  padding-top: 54px;
  border: 4px solid #fdcb6e;
  border-radius: 19px;
  background: #fff;
`;

const PraiseText = styled.p`
  display: flex;
  gap: 7.7px;
  margin: 5.8px 0 0;
  padding-right: 4px;
  color: #e17055;
  font-size: 29.5px;
  font-weight: 600;
  line-height: 45px;
  letter-spacing: -0.33px;

  span {
    margin-right: 5px;
  }
`;

/* ---------- data ---------- */

type Answer = { icon: string; text: string; right?: boolean; tall?: boolean; advance?: number };
type Question = { icon: string; advance: number; text: string; answers: Answer[] };

const questions: Question[] = [
  {
    icon: 'page',
    advance: 59,
    text: 'Khi sử dụng bài viết của người khác trên mạng, em cần phải thực hiện điều gì:',
    answers: [
      { icon: 'angry', text: 'Quấy rối' },
      { icon: 'memo', text: 'Ghi chú là sưu tầm' },
      { icon: 'cross', text: 'Sửa tên tác giả lại thành tên của em' },
      { icon: 'check', text: 'Dẫn nguồn tài liệu và tác giả', right: true },
    ],
  },
  {
    icon: 'warning',
    advance: 68.8,
    text: 'Khi tham gia trực tuyến, những thông tin nào em không nên chia sẻ:',
    answers: [
      { icon: 'landscape', text: 'Hình phong cảnh những nơi em đã đi qua' },
      { icon: 'ban', text: 'Địa chỉ, ngày sinh, lịch trình kỳ nghỉ của gia đình em', right: true, tall: true, advance: 58 },
      { icon: 'music', text: 'Bài hát và ca sĩ em thích' },
      { icon: 'clapper', text: 'Tên biệt danh của em và bộ phim em thích xem', advance: 57.7 },
    ],
  },
  {
    icon: 'envelope',
    advance: 68.8,
    text: 'Khi cần trao đổi nhiều nội dung và đính kèm các tập tin, em lựa chọn hình thức:',
    answers: [
      { icon: 'mobile', text: 'Tin nhắn văn bản SMS', advance: 55.8 },
      { icon: 'envelope', text: 'Thư điện tử', right: true, advance: 59.8 },
      { icon: 'handset', text: 'Gọi điện thoại', advance: 57.2 },
      { icon: 'speech', text: 'Tin nhắn tức thời', advance: 59.8 },
    ],
  },
  {
    icon: 'lock',
    advance: 59,
    text: 'Trong những thông tin sau đây, thông tin nào là an toàn và có thể chia sẻ trực tuyến:',
    answers: [
      { icon: 'book', text: 'Những quyển sách em thích xem', right: true },
      { icon: 'cake', text: 'Ngày sinh' },
      { icon: 'house', text: 'Địa chỉ nhà', advance: 55.2 },
      { icon: 'camera', text: 'Các tấm ảnh của em' },
    ],
  },
  {
    icon: 'globe',
    advance: 65.8,
    text: 'Lựa chọn khẳng định sai về đặc điểm thông tin trên internet:',
    answers: [
      { icon: 'cross', text: 'Thông tin nào trên internet cũng phù hợp với lứa tuổi của em', right: true, tall: true, advance: 55.8 },
      { icon: 'warning', text: 'Thông tin trên internet có thể không chính xác', advance: 59.6 },
      { icon: 'search', text: 'Rất nhiều thông tin có thể tìm thấy trên internet', advance: 58.2 },
      { icon: 'books', text: 'Thông tin trên internet giúp em rất nhiều trong học tập', tall: true, advance: 55.8 },
    ],
  },
  {
    icon: 'copyright',
    advance: 68.8,
    text: 'Khi sử dụng bài viết của người khác trên mạng, em cần phải thực hiện điều gì:',
    answers: [
      { icon: 'check', text: 'Dẫn nguồn tài liệu và tác giả', right: true },
      { icon: 'cross', text: 'Sửa tên tác giả lại thành tên của em' },
      { icon: 'angry', text: 'Quấy rối' },
      { icon: 'memo', text: 'Ghi chú là sưu tầm' },
    ],
  },
  {
    icon: 'folder',
    advance: 67.3,
    text: 'Để tạo thư mục, em chọn lệnh nào?',
    answers: [
      { icon: 'folder', text: 'new folder', right: true, advance: 58 },
      { icon: 'trash', text: 'delete' },
      { icon: 'clipboard', text: 'copy', advance: 55.4 },
      { icon: 'pencil', text: 'rename' },
    ],
  },
  {
    icon: 'trash',
    advance: 68.5,
    text: 'Để xóa thư mục, em chọn lệnh nào?',
    answers: [
      { icon: 'clipboard', text: 'copy', advance: 55.4 },
      { icon: 'pencil', text: 'rename' },
      { icon: 'trash', text: 'delete', right: true },
      { icon: 'folder', text: 'new folder', advance: 58 },
    ],
  },
  {
    icon: 'earth',
    advance: 66.3,
    text: 'Internet có thể giúp em:',
    answers: [
      { icon: 'gamepad', text: 'Giải trí' },
      { icon: 'books', text: 'Học tập', advance: 55.2 },
      { icon: 'glow', text: 'Tìm kiếm thông tin, học tập, vui chơi và giải trí...', right: true, advance: 59.4 },
      { icon: 'briefcase', text: 'Làm việc' },
    ],
  },
  {
    icon: 'keyboard',
    advance: 68.5,
    text: 'Phím dùng để viết chữ hoa là phím nào?',
    answers: [
      { icon: 'tab', text: 'Tab', advance: 56 },
      { icon: 'plus', text: 'Insert', advance: 58.2 },
      { icon: 'abcd', text: 'Caps Lock', right: true },
      { icon: 'enter', text: 'Enter', advance: 58.4 },
    ],
  },
];

const stats = [
  { icon: 'star', label: 'Điểm số', value: '10/10' },
  { icon: 'check', label: 'Số câu đúng', value: '10' },
  { icon: 'cross', label: 'Số câu sai', value: '0' },
  { icon: 'stopwatch', label: 'Thời gian', value: '1:24' },
];

const QuestionCard = ({ question, index }: { question: Question; index: number }) => (
  <Card>
    <CardHead>
      <Icon name={question.icon} size={48} lift={1.6} advance={question.advance} />
      Câu {index + 1}
    </CardHead>
    <QuestionText>{question.text}</QuestionText>
    {question.answers.map((a) => (
      <Option key={a.text} $right={a.right} $tall={a.tall}>
        <Icon name={a.icon} size={39.8} lift={a.tall ? 26.2 : 4.5} advance={a.advance ?? 59} />
        <span>{a.text}</span>
      </Option>
    ))}
    <Feedback>
      <Tick>✓</Tick> Chính xác!
    </Feedback>
  </Card>
);

export function App() {
  return (
    <Page>
      <GlobalStyle />

      <Banner>
        <BannerTitle>
          <Icon name="memo" size={54.8} lift={3.4} />
          <span>Bài Thi thử Tin Học Lớp 5</span>
          <Icon name="memo" size={54.8} lift={3.4} />
        </BannerTitle>
        <BannerText>10 câu hỏi ngẫu nhiên - Thời gian: 15 phút</BannerText>
      </Banner>

      <InfoBar>
        <Field>
          <FieldLabel $width={171.8}>
            <Icon name="person" size={28.8} lift={3.1} advance={32.2} />
            Họ và tên:
          </FieldLabel>
          <FieldValue $width={380.6}>Trần Ngọc Khánh Vân</FieldValue>
        </Field>
        <Field>
          <FieldLabel $width={106.4}>
            <Icon name="school" size={27.6} lift={4.3} advance={36.4} />
            Lớp:
          </FieldLabel>
          <FieldValue $width={190}>5/4</FieldValue>
        </Field>
        <Field $end>
          <FieldLabel $width={218.2}>
            <Icon name="calendar" size={27.2} lift={4.4} advance={35.4} />
            Ngày làm bài:
          </FieldLabel>
          <FieldValue $width={326.5}>23/12/2025</FieldValue>
        </Field>
      </InfoBar>

      <ScorePanel>
        <ScoreTitle>
          <Icon name="star" size={43} lift={5.5} />
          <span>Điểm Thi thử</span>
          <Icon name="star" size={43} lift={5.5} />
        </ScoreTitle>
        <ScoreValue>10/10</ScoreValue>
      </ScorePanel>

      <Questions>
        {questions.map((q, i) => (
          <QuestionCard key={i} question={q} index={i} />
        ))}
      </Questions>

      <ResultPanel>
        <ResultTitle>
          <Icon name="party" size={51.5} lift={5} />
          <span>Kết Quả Thi thử</span>
          <Icon name="party" size={51.5} lift={5} />
        </ResultTitle>
        <Stats>
          {stats.map((s) => (
            <Stat key={s.label}>
              <Icon name={s.icon} size={57} />
              <StatLabel>{s.label}</StatLabel>
              <StatValue>{s.value}</StatValue>
            </Stat>
          ))}
        </Stats>
        <Praise>
          <Icon name="trophy" size={74.4} />
          <PraiseText>
            <span>Xuất sắc! Em làm đúng tất cả 10 câu! Thật tuyệt vời!</span>
            <Icon name="glow" size={34} lift={5.6} />
            <Icon name="star" size={35} lift={5.4} />
          </PraiseText>
        </Praise>
      </ResultPanel>
    </Page>
  );
}

export default App;
